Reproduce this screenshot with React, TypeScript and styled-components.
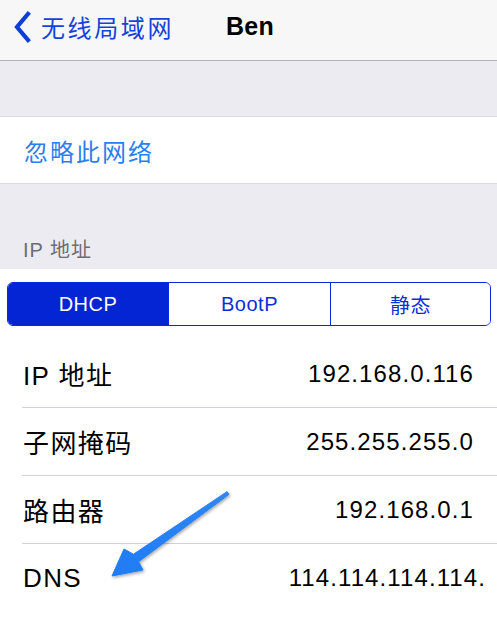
import React from 'react';
import styled, { createGlobalStyle } from 'styled-components';

const GlobalStyle = createGlobalStyle`
  html, body {
    margin: 0;
    padding: 0;
    background: #ffffff;
  }
  body {
    font-family: "Liberation Sans", "Noto Sans CJK SC", sans-serif;
    -webkit-font-smoothing: antialiased;
  }
`;

const rows = [
  { label: 'IP 地址', value: '192.168.0.116' },
  { label: '子网掩码', value: '255.255.255.0' },
  { label: '路由器', value: '192.168.0.1' },
  { label: 'DNS', value: '114.114.114.114.', overflow: true },
];

const segments = ['DHCP', 'BootP', '静态'];

export default function App() {
  return (
    <Page>
      <GlobalStyle />
      <NavBar>
        <BackButton>
          <svg width="20" height="32" viewBox="0 0 20 32">
            <path d="M16 3 L5 16 L16 29" fill="none" stroke="#0c3fd9" strokeWidth="4.2" strokeLinecap="square" strokeLinejoin="miter" />
          </svg>
          <BackLabel>无线局域网</BackLabel>
        </BackButton>
        <Title>Ben</Title>
      </NavBar>

      <Spacer $height={55} />

      <Group>
        <ActionRow>忽略此网络</ActionRow>
      </Group>

      <SectionHeader>IP 地址</SectionHeader>

      <Panel>
        <Segmented>
          {segments.map((item, index) => (
            <Segment key={item} $active={index === 0}>{item}</Segment>
          ))}
        </Segmented>
        <List>
          {rows.map((row, index) => (
            <Row key={row.label} $last={index === rows.length - 1}>
              <Label>{row.label}</Label>
              <Value $overflow={row.overflow}>{row.value}</Value>
            </Row>
          ))}
        </List>
      </Panel>

      <Arrow width="497" height="618" viewBox="0 0 497 618">
        <defs>
          <filter id="arrowShadow" x="-20%" y="-20%" width="140%" height="140%">
            <feDropShadow dx="1" dy="1.5" stdDeviation="1.6" floodColor="#000" floodOpacity="0.35" />
          </filter>
          <linearGradient id="arrowFill" x1="228" y1="492" x2="112" y2="576" gradientUnits="userSpaceOnUse">
            <stop offset="0" stopColor="#2f86f6" />
            <stop offset="1" stopColor="#1f7cf5" />
          </linearGradient>
        </defs>
        <polygon
          points="227.1,491.6 133.4,554.3 124,549 112,576 143,570 138.6,561.7 229,494.4"
          fill="url(#arrowFill)"
          stroke="url(#arrowFill)"
          strokeWidth="1"
          strokeLinejoin="round"
          filter="url(#arrowShadow)"
        />
      </Arrow>
    </Page>
  );
}

const Page = styled.div`
  position: relative;
  width: 497px;
  height: 618px;
  overflow: hidden;
  background: #ebebf1;
`;

const NavBar = styled.div`
  display: flex;
  align-items: center;
  height: 61px;
  padding: 0 0 0 12px;
  box-sizing: border-box;
  background: #f7f7f8;
  border-bottom: 1px solid #b4b4b8;
`;

const BackButton = styled.div`
  display: flex;
  align-items: center;
  gap: 9px;
  margin-top: -7px;

  svg {
    flex-shrink: 0;
  }
`;

const BackLabel = styled.span`
  color: #1443da;
  font-size: 24px;
  letter-spacing: 2.6px;
`;

const Title = styled.span`
  margin-left: 52px;
  margin-top: -7px;
  color: #000;
  font-size: 25px;
  font-weight: 700;
  letter-spacing: 0.3px;
`;

const Spacer = styled.div<{ $height: number }>`
  height: ${(p) => p.$height}px;
`;

const Group = styled.div`
  background: #ffffff;
  border-top: 1px solid #d9d9de;
  border-bottom: 1px solid #d9d9de;
`;

const ActionRow = styled.div`
  display: flex;
  align-items: center;
  height: 66px;
  padding: 0 0 0 24px;
  color: #2a7ef0;
  font-size: 24px;
  letter-spacing: 2px;
`;

const SectionHeader = styled.div`
  height: 85px;
  box-sizing: border-box;
  padding: 50px 0 0 23px;
  color: #6d6d72;
  font-size: 20px;
  letter-spacing: 1px;
`;

const Panel = styled.div`
  background: #ffffff;
  padding-top: 13px;
  height: 400px;
`;

const Segmented = styled.div`
  display: grid;
  grid-template-columns: 160px 162px 1fr;
  margin: 0 6px 0 7px;
  height: 44px;
  box-sizing: border-box;
  border: 1.5px solid #0628d6;
  border-radius: 6px;
  overflow: hidden;
`;

const Segment = styled.div<{ $active: boolean }>`
  display: flex;
  align-items: center;
  justify-content: center;
  background: ${(p) => (p.$active ? '#0425d4' : '#ffffff')};
  color: ${(p) => (p.$active ? '#ffffff' : '#0a2fd8')};
  font-size: 20px;
  letter-spacing: 0.5px;
  & + & {
    border-left: 1.5px solid #0628d6;
  }
`;

const List = styled.div`
  margin-top: 14px;
  padding-left: 22px;
`;

const Row = styled.div<{ $last: boolean }>`
  display: flex;
  align-items: center;
  justify-content: space-between;
  height: 68px;
  box-sizing: border-box;
  padding-right: 23px;
  border-bottom: ${(p) => (p.$last ? 'none' : '1px solid #d2d2d7')};
`;

const Label = styled.span`
  padding-left: 1px;
  color: #000;
  font-size: 26px;
  letter-spacing: 1.4px;
`;

const Value = styled.span<{ $overflow?: boolean }>`
  margin-right: ${(p) => (p.$overflow ? '-12px' : '0')};
  color: #000;
  font-size: 24px;
  letter-spacing: 1.1px;
  white-space: nowrap;
`;

const Arrow = styled.svg`
  position: absolute;
  left: 0;
  top: 0;
  pointer-events: none;
`;
